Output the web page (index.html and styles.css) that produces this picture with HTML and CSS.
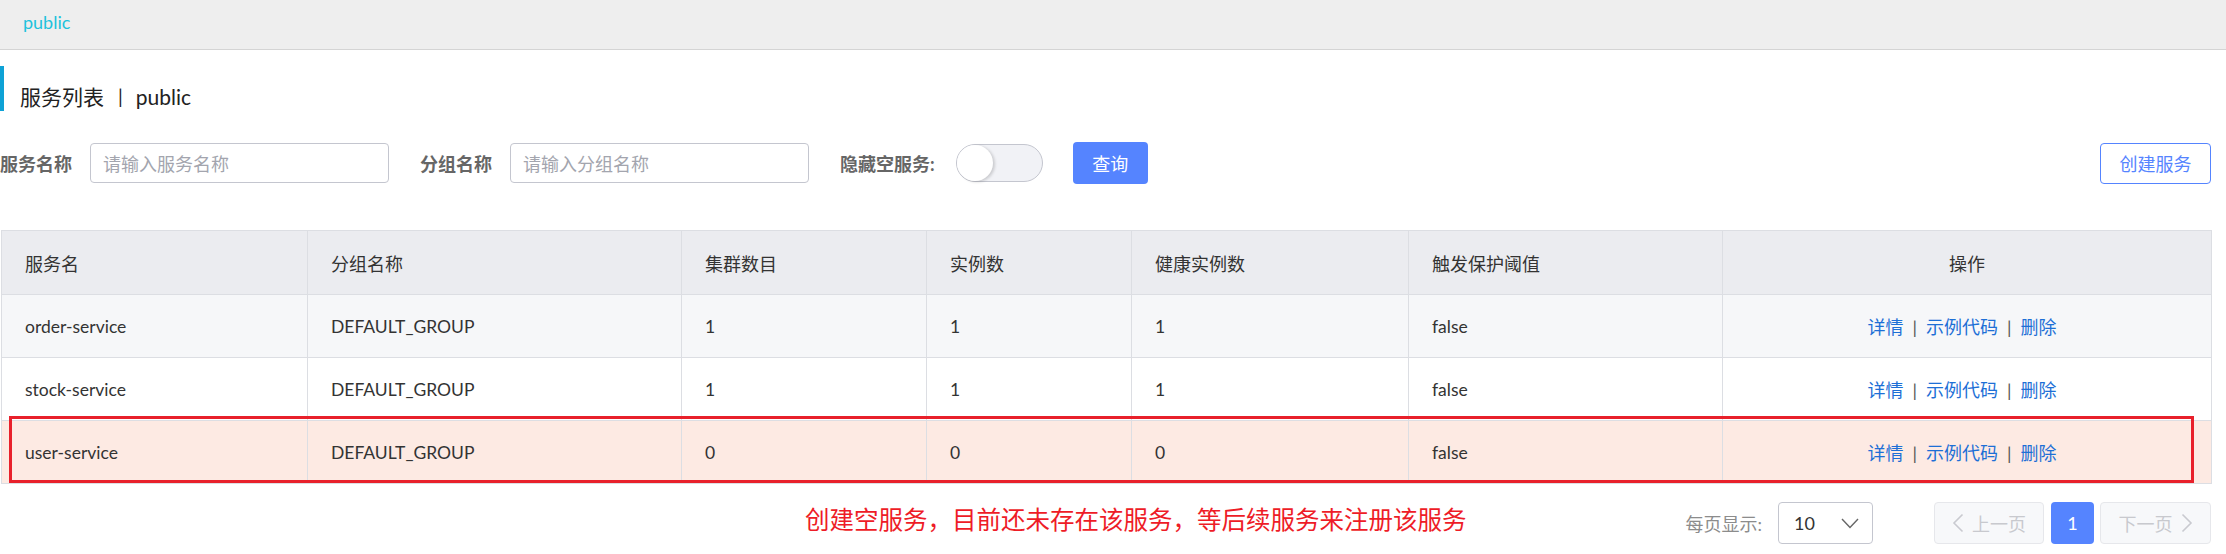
FILE: index.html
```html
<!DOCTYPE html>
<html lang="zh-CN">
<head>
<meta charset="utf-8">
<title>服务列表</title>
<link rel="stylesheet" href="styles.css">
</head>
<body>
<div class="topbar"><span class="crumb">public</span></div>
<div class="main">
  <div class="page-title">服务列表<span class="title-sep">|</span>public</div>

  <div class="filters">
    <span class="f-label">服务名称</span>
    <div class="f-input"><span class="ph">请输入服务名称</span></div>
    <span class="f-label f-label-2">分组名称</span>
    <div class="f-input"><span class="ph">请输入分组名称</span></div>
    <span class="f-label f-label-3">隐藏空服务:</span>
    <div class="switch"><span class="knob"></span></div>
    <button class="btn-primary">查询</button>
    <button class="btn-outline">创建服务</button>
  </div>

  <div class="table-wrap">
    <table class="grid">
      <colgroup>
        <col class="c1"><col class="c2"><col class="c3"><col class="c4"><col class="c5"><col class="c6"><col class="c7">
      </colgroup>
      <thead>
        <tr>
          <th>服务名</th><th>分组名称</th><th>集群数目</th><th>实例数</th><th>健康实例数</th><th>触发保护阈值</th><th class="center">操作</th>
        </tr>
      </thead>
      <tbody>
        <tr class="row-alt">
          <td>order-service</td><td>DEFAULT_GROUP</td><td>1</td><td>1</td><td>1</td><td>false</td>
          <td class="center ops"><a>详情</a><span class="op-sep">|</span><a>示例代码</a><span class="op-sep">|</span><a>删除</a></td>
        </tr>
        <tr>
          <td>stock-service</td><td>DEFAULT_GROUP</td><td>1</td><td>1</td><td>1</td><td>false</td>
          <td class="center ops"><a>详情</a><span class="op-sep">|</span><a>示例代码</a><span class="op-sep">|</span><a>删除</a></td>
        </tr>
        <tr class="row-hl">
          <td>user-service</td><td>DEFAULT_GROUP</td><td>0</td><td>0</td><td>0</td><td>false</td>
          <td class="center ops"><a>详情</a><span class="op-sep">|</span><a>示例代码</a><span class="op-sep">|</span><a>删除</a></td>
        </tr>
      </tbody>
    </table>
    <div class="mark-box"></div>
  </div>

  <div class="footer">
    <span class="note">创建空服务，目前还未存在该服务，等后续服务来注册该服务</span>
    <div class="pager">
      <span class="pg-label">每页显示:</span>
      <div class="pg-select"><span>10</span>
        <svg class="chev" width="18" height="11" viewBox="0 0 18 11"><path d="M1 1 L9 9.5 L17 1" fill="none" stroke="#666" stroke-width="1.4"/></svg>
      </div>
      <div class="pg-btn pg-prev">
        <svg width="12" height="20" viewBox="0 0 12 20"><path d="M10.5 1.5 L2 10 L10.5 18.5" fill="none" stroke="#c9cad0" stroke-width="1.6"/></svg>
        <span>上一页</span>
      </div>
      <div class="pg-cur">1</div>
      <div class="pg-btn pg-next">
        <span>下一页</span>
        <svg width="12" height="20" viewBox="0 0 12 20"><path d="M1.5 1.5 L10 10 L1.5 18.5" fill="none" stroke="#c9cad0" stroke-width="1.6"/></svg>
      </div>
    </div>
  </div>
</div>
</body>
</html>
```
FILE: styles.css
```css
* { box-sizing: border-box; }
html, body { margin: 0; padding: 0; background: #fff; }
body {
  font-family: Lato, "Noto Sans CJK SC", sans-serif;
  color: #333;
  width: 2226px;
  height: 554px;
  overflow: hidden;
}

.topbar {
  height: 50px;
  background: #eeeeee;
  border-bottom: 1px solid #d4d4d4;
  display: flex;
  align-items: center;
  padding-left: 23px;
  padding-bottom: 6px;
}
.crumb { color: #1ec2dc; font-size: 18px; }

.main { padding-right: 15px; }

.page-title {
  margin-top: 16px;
  height: 45px;
  border-left: 4px solid #0ea2d6;
  padding-left: 16px;
  padding-top: 15px;
  display: flex;
  align-items: center;
  font-size: 21px;
  color: #222;
}
.title-sep { margin: 0 13px 0 14px; font-size: 19px; }

.filters {
  margin-top: 31px;
  height: 42px;
  display: flex;
  align-items: center;
}
.f-label { font-size: 18px; font-weight: bold; color: #666; }
.f-label-2 { margin-left: 31px; }
.f-label-3 { margin-left: 31px; }
.f-input {
  margin-left: 18px;
  width: 299px;
  height: 40px;
  border: 1px solid #c4c6cf;
  border-radius: 4px;
  display: flex;
  align-items: center;
  padding-left: 12px;
}
.ph { font-size: 18px; color: #a3a5ae; }

.switch {
  margin-left: 21px;
  width: 87px;
  height: 38px;
  border: 1px solid #c4c6cf;
  border-radius: 19px;
  background: #f1f2f6;
  position: relative;
}
.knob {
  position: absolute;
  left: 0;
  top: 0;
  width: 36px;
  height: 36px;
  border-radius: 50%;
  background: #fff;
  box-shadow: 2px 1px 3px rgba(0,0,0,0.16);
}

.btn-primary {
  margin-left: 30px;
  width: 75px;
  height: 42px;
  border: none;
  border-radius: 4px;
  background: #5584ff;
  color: #fff;
  font-family: inherit;
  font-size: 18px;
  padding: 0;
}
.btn-outline {
  margin-left: auto;
  width: 111px;
  height: 41px;
  border: 1px solid #5584ff;
  border-radius: 4px;
  background: #fff;
  color: #5584ff;
  font-family: inherit;
  font-size: 18px;
  padding: 0;
}

.table-wrap {
  margin-top: 46px;
  margin-left: 1px;
  position: relative;
}
.grid {
  width: 2210px;
  border-collapse: collapse;
  table-layout: fixed;
  font-size: 18px;
}
.c1 { width: 306px; }
.c2 { width: 374px; }
.c3 { width: 245px; }
.c4 { width: 205px; }
.c5 { width: 277px; }
.c6 { width: 314px; }
.c7 { width: 489px; }
.grid th, .grid td {
  border: 1px solid #dcdee3;
  padding: 0 23px;
  text-align: left;
  font-weight: normal;
  color: #333;
  white-space: nowrap;
}
.grid td { font-size: 17.5px; }
.grid td.ops { font-size: 18px; padding-right: 28px; padding-left: 18px; }
.grid thead tr { height: 64px; background: #ebecf0; }
.grid tbody tr { height: 63px; }
.grid .row-alt { background: #f6f7f9; }
.grid .row-hl { background: #fdeae3; }
.grid .center { text-align: center; }
.ops a { color: #1d6fd6; }
.op-sep { margin: 0 9px; color: #555; }

.mark-box {
  position: absolute;
  left: 8px;
  top: 186px;
  width: 2185px;
  height: 67px;
  border: 3px solid #e8202b;
}

.footer {
  margin-top: 18px;
  height: 42px;
  display: flex;
  align-items: center;
}
.note {
  margin-left: 805px;
  margin-bottom: 10px;
  font-size: 24.5px;
  color: #ee1c27;
}
.pager {
  margin-left: auto;
  display: flex;
  align-items: center;
  height: 42px;
}
.pg-label { font-size: 18px; color: #8c8c8c; }
.pg-select {
  margin-left: 16px;
  width: 95px;
  height: 42px;
  border: 1px solid #c4c6cf;
  border-radius: 4px;
  display: flex;
  align-items: center;
  justify-content: space-between;
  padding: 0 13px 0 15px;
  font-size: 18px;
  color: #333;
}
.pg-btn {
  height: 42px;
  border: 1px solid #e6e7eb;
  border-radius: 4px;
  background: #f7f8fa;
  display: flex;
  align-items: center;
  justify-content: center;
  gap: 8px;
  font-size: 18px;
  color: #c8c9ce;
}
.pg-prev { margin-left: 61px; width: 110px; }
.pg-next { margin-left: 6px; width: 111px; }
.pg-cur {
  margin-left: 7px;
  width: 43px;
  height: 42px;
  border-radius: 4px;
  background: #5584ff;
  color: #fff;
  font-size: 18px;
  display: flex;
  align-items: center;
  justify-content: center;
}
```
